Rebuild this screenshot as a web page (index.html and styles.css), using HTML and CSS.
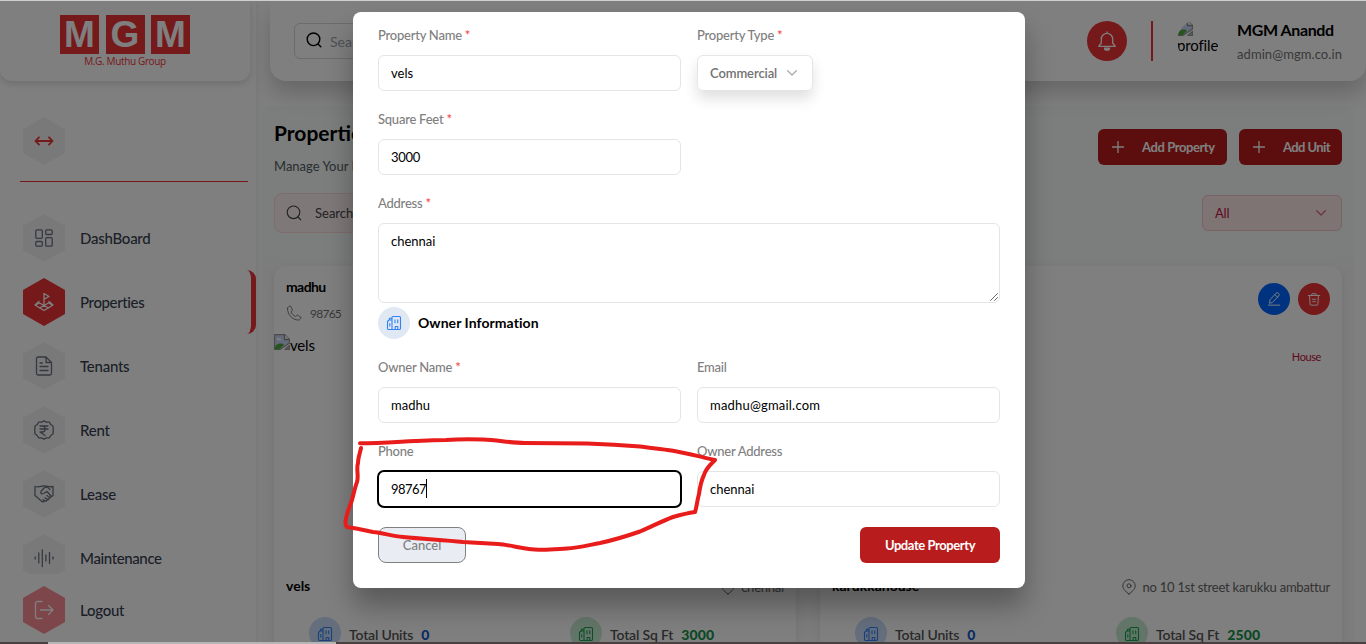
FILE: index.html
```html
<!DOCTYPE html>
<html lang="en">
<head>
<meta charset="utf-8">
<title>MGM Properties</title>
<link rel="stylesheet" href="styles.css">
</head>
<body>
<svg class="defs" width="0" height="0">
  <symbol id="building" viewBox="0 0 16 16"><path d="M6 14.5V2.6A1.1 1.1 0 0 1 7.100 1.500h6.300A1.100 1.100 0 0 1 14.500 2.600v10.800a1.100 1.100 0 0 1-1.100 1.100H2.600a1.100 1.100 0 0 1-1.100-1.100V6.500L3 5h3M3.500 5V3.300H6M9.200 14.500v-3h2.600v3M3.800 8.500v2.500M9 4.800v3M11.700 4.800v3"/></symbol>
  <symbol id="pin" viewBox="0 0 16 16"><path d="M8 15C5.500 13 1.800 10.500 1.800 6.900a6.200 6.200 0 0 1 12.400 0C14.200 10.500 10.500 13 8 15z"/><circle cx="8" cy="6.800" r="2"/></symbol>
  <symbol id="search" viewBox="0 0 16 16"><circle cx="7.500" cy="7.300" r="6.300"/><path d="m12 12 2.800 2.800"/></symbol>
  <symbol id="chevron" viewBox="0 0 10 6"><path d="m.7.700 4.300 4.300L9.300.700"/></symbol>
  <symbol id="broken" viewBox="0 0 16 16"><path d="M.5 15V.500h10l5 5V9L6 15.500z" fill="#c6d7f5" stroke="#999"/><path d="M10.500.500v5h5" fill="#fff" stroke="#888"/><path d="M2.500 5.500q1.500-2.500 3.500-.8 2 0 1.500 1.500h-5z" fill="#fff"/><path d="M.5 15.500c0-4 3-6 6-6 2 0 3 .7 3.500 1.500L5 15.500z" fill="#4ea83a"/><path d="m11 15.500 4.500-4v4z" fill="#b5c9ec" stroke="#999"/></symbol>
</svg>
<div class="strip"></div>
<div class="app">
  <aside class="side">
    <div class="brand">
      <div class="tiles"><b>M</b><b>G</b><b>M</b></div>
      <div class="brand-name">M.G. Muthu Group</div>
    </div>
    <div class="toggle"><span class="hex"><svg class="ic red" viewBox="0 0 20 20"><path d="M1.500 10h17M5 6.300 1.500 10 5 13.700M15 6.300l3.500 3.700-3.500 3.700"/></svg></span></div>
    <hr class="rule">
    <nav class="nav">
      <a class="item"><span class="hex"><svg class="ic" viewBox="0 0 20 20"><rect x="1.800" y="1.800" width="6.500" height="8.500" rx="1"/><rect x="11.700" y="1.800" width="6.500" height="4.700" rx="1"/><rect x="1.800" y="13.500" width="6.500" height="4.700" rx="1"/><rect x="11.700" y="9.700" width="6.500" height="8.500" rx="1"/></svg></span><span>DashBoard</span></a>
      <a class="item active"><span class="hex hot"><svg class="ic" viewBox="0 0 20 20"><path d="M10 12V1.500l5 3-5 2.800M5 9.500l-4 3.500 9 5.500 9-5.500-4-3.500M1.500 13l4-2 9 5M18.500 13l-4-2-9 5"/></svg></span><span class="tight">Properties</span></a>
      <a class="item"><span class="hex"><svg class="ic" viewBox="0 0 20 20"><path d="M12 1H4a1.500 1.500 0 0 0-1.500 1.500v15A1.500 1.500 0 0 0 4 19h12a1.500 1.500 0 0 0 1.500-1.500v-11zM12 1v5.500h5.500M6 7h2.500M6 10.500h8M6 14.500h8"/></svg></span><span>Tenants</span></a>
      <a class="item"><span class="hex"><svg class="ic" viewBox="0 0 20 20"><path d="M10 .8l2.500 1.300 2.800.1 1.500 2.400 2.300 1.700v2.500L19.500 10l-.4 1.300v2.500l-2.300 1.700-1.500 2.300-2.800.1L10 19.200l-2.500-1.300-2.800-.1-1.500-2.300-2.300-1.700v-2.500L.5 10l.4-1.200V6.300l2.300-1.700 1.500-2.400 2.800-.1zM6 6h8M6 9h8M6 6h2.500c3.500 0 3.500 6 0 6H6l5 3.500"/></svg></span><span>Rent</span></a>
      <a class="item"><span class="hex"><svg class="ic" viewBox="0 0 20 20"><path d="M1 2.500c3 1 5 .3 8-.5 4-.5 6 1.500 10 .5v9l-2 1.500M1 2.500v9L8.500 18l2-.7-1.500-1.500M9.500 16l2.500 1.200 1.500-1.500-2.500-2M12.500 15l2 .5 1.300-1.700-2.800-2.300M15.500 13.500l2-1L13 7.500 9.500 9.500C7.500 10.500 6 9 7 7.500l3-3.500c2-1.500 4-1 6 1.500"/></svg></span><span>Lease</span></a>
      <a class="item"><span class="hex"><svg class="ic" viewBox="0 0 20 20"><path d="M1.200 9v2M4.800 5v10M8.300 2v16.500M11.900 7v6M15.500 4.500v11M19 9v2"/></svg></span><span class="tight">Maintenance</span></a>
    </nav>
    <a class="item logout"><span class="hex pink"><svg class="ic" viewBox="0 0 20 20"><path d="M8 1.500H3.500a2 2 0 0 0-2 2v13a2 2 0 0 0 2 2H8M6.500 10h12M14.500 5.500 19 10l-4.500 4.500"/></svg></span><span>Logout</span></a>
  </aside>
  <div class="right">
    <header class="top">
      <div class="top-search"><svg class="ic16" viewBox="0 0 16 16"><use href="#search"/></svg><span>Search</span></div>
      <div class="user">
        <span class="bell"><svg class="ic" viewBox="0 0 20 20"><path d="M4.300 12V8a5.700 5.700 0 0 1 11.400 0v4l2.600 3.300H1.700zM10 1v1.300"/><path d="M7.500 17.200h5a2.500 2 0 0 1-5 0z" fill="currentColor"/></svg></span>
        <span class="bar"></span>
        <span class="avatar"><svg class="broken" viewBox="0 0 16 16"><use href="#broken"/></svg><span class="t-profile">profile</span></span>
        <span class="who"><strong>MGM Anandd</strong><span class="t-mail">admin@mgm.co.in</span></span>
      </div>
    </header>
    <main class="panel">
      <div class="head">
        <div><h1>Properties</h1><p class="sub">Manage Your Properties</p></div>
        <div class="acts">
          <span class="btn add"><svg class="plus" viewBox="0 0 12 12"><path d="M6 .5v11M.5 6h11"/></svg><span class="t-add">Add Property</span></span>
          <span class="btn add"><svg class="plus" viewBox="0 0 12 12"><path d="M6 .5v11M.5 6h11"/></svg><span class="t-unit">Add Unit</span></span>
        </div>
      </div>
      <div class="filters">
        <div class="find"><svg class="ic16" viewBox="0 0 16 16"><use href="#search"/></svg><span>Search</span></div>
        <div class="all"><span>All</span><svg class="chev" viewBox="0 0 10 6"><use href="#chevron"/></svg></div>
      </div>
      <div class="cards">
        <section class="card">
          <div class="card-head"><div><h2 class="t-madhu">madhu</h2><div class="tel"><svg class="ic16" viewBox="0 0 16 16"><path d="M1.500 3.500C1.500 10 6.500 15 12.500 15c1.500 0 2.500-1.500 2.500-2.500L11.500 10l-2 1.500C7.500 10.500 5.500 8.500 5 7l1.500-2L4.500 1c-1.500 0-3 1-3 2.500z"/></svg><span>98765</span></div></div></div>
          <div class="photo"><svg class="broken" viewBox="0 0 16 16"><use href="#broken"/></svg><span class="t-alt">vels</span></div>
          <div class="place"><h2>vels</h2><span class="loc"><svg class="ic16" viewBox="0 0 16 16"><use href="#pin"/></svg><span>chennai</span></span></div>
          <div class="stats">
            <div class="stat blue"><span class="dot"><svg class="ic16" viewBox="0 0 16 16"><use href="#building"/></svg></span><span>Total Units</span><b>0</b></div>
            <div class="stat green"><span class="dot"><svg class="ic16" viewBox="0 0 16 16"><use href="#building"/></svg></span><span>Total Sq Ft</span><b>3000</b></div>
          </div>
        </section>
        <section class="card">
          <div class="card-head end">
            <span class="round edit"><svg class="ic16" viewBox="0 0 16 16"><path d="M1.500 15h13M3 12.500l.5-3.800L10.300 1.500a2.100 2.100 0 0 1 3 3L6.500 11.700zM9 3l3 3"/></svg></span>
            <span class="round del"><svg class="ic16" viewBox="0 0 16 16"><path d="M1.500 4h13M5 4l.7-2h4.600L11 4M3 4l.5 10a1 1 0 0 0 1 1h7a1 1 0 0 0 1-1L13 4M6 8.300h4M6.500 11h3"/></svg></span>
          </div>
          <div class="photo kind"><span>House</span></div>
          <div class="place"><h2>karukkahouse</h2><span class="loc"><svg class="ic16" viewBox="0 0 16 16"><use href="#pin"/></svg><span>no 10 1st street karukku ambattur</span></span></div>
          <div class="stats">
            <div class="stat blue"><span class="dot"><svg class="ic16" viewBox="0 0 16 16"><use href="#building"/></svg></span><span>Total Units</span><b>0</b></div>
            <div class="stat green"><span class="dot"><svg class="ic16" viewBox="0 0 16 16"><use href="#building"/></svg></span><span>Total Sq Ft</span><b>2500</b></div>
          </div>
        </section>
      </div>
    </main>
  </div>
</div>
<div class="taskbar"><span></span></div>

<div class="overlay">
  <form class="modal">
    <div class="field"><label>Property Name <i>*</i></label><div class="input">vels</div></div>
    <div class="field"><label>Property Type <i>*</i></label><div class="select"><span>Commercial</span><svg class="chev" viewBox="0 0 10 6"><use href="#chevron"/></svg></div></div>
    <div class="field wide half"><label>Square Feet <i>*</i></label><div class="input digits">3000</div></div>
    <div class="field wide area"><label>Address <i>*</i></label><div class="input tall">chennai<svg class="grip" viewBox="0 0 8 8"><path d="M.5 7.500l7-7M4.500 7.500l3-3"/></svg></div></div>
    <div class="owner"><span class="dot"><svg class="ic16" viewBox="0 0 16 16"><use href="#building"/></svg></span><h3>Owner Information</h3></div>
    <div class="field"><label>Owner Name <i>*</i></label><div class="input">madhu</div></div>
    <div class="field"><label>Email</label><div class="input mail">madhu@gmail.com</div></div>
    <div class="field"><label>Phone</label><div class="input focus">98767<span class="caret"></span></div></div>
    <div class="field"><label>Owner Address</label><div class="input">chennai</div></div>
    <div class="foot"><span class="btn cancel">Cancel</span><span class="btn update">Update Property</span></div>
  </form>
</div>
<svg class="mark" viewBox="0 0 1366 644"><path d="M360 443.300C388 443 419 440 446 440C459 439 471 439 483 439.500C498 440 510 443 525 443L587 443.500C605 444 623 445 640 446.500C651 448 662 449 673 450.700C687 453 701 457 715 460C711 464 706 468 704 475C701 481 700 487 699 494C697 501 697 506 695 512C688 513 680 515 673 517C662 521 651 527 640 531.500C627 536 614 540 600 543C589 545 578 548 567 548.500C558 549 549 550 540 549.700C525 550 512 545 498 544L463 542C443 540 423 539 403 537C392 536 383 533 373 532C364 530 355 528 347 527C345 525 345 523 346 519C347 512 350 506 352 500C354 493 355 487 357 482C359 476 356 469 358 463C358 458 360 453 361 448"/></svg>
</body>
</html>
```
FILE: styles.css
```css
* { box-sizing: border-box; margin: 0; padding: 0; }
body { width: 1366px; height: 644px; overflow: hidden; font-family: Lato, "Open Sans", sans-serif; font-size: 14px; color: #000; background: #fff; white-space: nowrap; }
svg { fill: none; stroke: currentColor; stroke-width: 1.3; stroke-linecap: round; stroke-linejoin: round; flex: none; }
.defs { position: absolute; }
.strip { height: 1px; background: #ccd0d0; }
.app { display: flex; height: 641px; overflow: hidden; }
.ic { width: 20px; height: 20px; }
.ic16 { width: 16px; height: 16px; stroke-width: 1.1; }

.side { width: 256px; height: 641px; flex: none; display: flex; flex-direction: column; box-shadow: 2px 0 5px rgba(0,0,0,.06); z-index: 1; }
.brand { width: 250px; height: 80px; padding-top: 14px; border-radius: 0 0 12px 12px; box-shadow: 0 3px 7px rgba(0,0,0,.14); display: flex; flex-direction: column; align-items: center; }
.tiles { display: flex; gap: 6.500px; }
.tiles b { width: 39px; height: 39px; display: flex; align-items: center; justify-content: center; background: #ed3237; color: #fff; font: bold 37px/39px "Liberation Sans", sans-serif; }
.brand-name { font: 10px/14px "Open Sans", sans-serif; letter-spacing: -.35px; color: #ed3237; }
.toggle { padding: 36px 0 0 23px; }
.hex { width: 42px; height: 48px; flex: none; display: flex; align-items: center; justify-content: center; background: #f3f3f3; color: #6b7280; clip-path: polygon(50% 0, 100% 25%, 100% 75%, 50% 100%, 0 75%, 0 25%); }
.ic.red { color: #ed3237; stroke-width: 1.800; }
.rule { border: 0; height: 1px; margin: 16px 8px 24px 20px; background: #ed3237; flex: none; }
.nav { height: 368px; overflow: hidden; flex: none; }
.item { display: flex; align-items: center; gap: 15px; height: 64px; padding-left: 23px; font-size: 15px; font-weight: 500; color: #374151; letter-spacing: -.25px; }
.item span + span { padding-bottom: 1px; }
.item .tight { letter-spacing: -.38px; }
.active { border-right: 5px solid #ed3237; border-radius: 9px; }
.hot { background: #ed3237; color: #fff; }
.logout { height: 48px; margin-top: 12px; flex: none; }
.pink { background: #fb8c94; color: #fff; }

.right { flex: 1; padding-left: 6px; }
.top { height: 80px; margin-left: 8px; padding: 0 24px; display: flex; align-items: center; justify-content: space-between; background: #fff; border-radius: 0 0 16px 16px; box-shadow: 0 12px 22px rgba(0,0,0,.2); position: relative; }
.top-search { width: 320px; height: 36px; border: 1px solid #d8d8d8; border-radius: 6px; display: flex; align-items: center; gap: 8px; padding-left: 11px; color: #000; }
.top-search svg { stroke-width: 1.4; margin-bottom: 2px; }
.top-search span { color: #9ca3af; }
.user { display: flex; align-items: center; }
.bell { width: 40px; height: 40px; border-radius: 50%; background: #ed3237; color: #fff; display: flex; align-items: center; justify-content: center; margin-right: 24px; }
.bar { width: 2px; height: 40px; background: #ed3237; margin-right: 24px; }
.avatar { width: 42px; height: 42px; display: flex; flex-direction: column; overflow: hidden; margin-right: 18px; font-size: 15px; line-height: 20px; border-radius: 50%; letter-spacing: -.15px; }
.broken { width: 16px; height: 16px; stroke: none; }
.t-profile { margin-top: -1px; }
.who { width: 105px; display: flex; flex-direction: column; gap: 5px; }
.who strong { font-size: 16px; line-height: 20px; letter-spacing: -.4px; }
.t-mail { font-size: 13px; line-height: 18px; color: #737373; letter-spacing: .08px; }

.panel { width: 1092px; height: 560px; margin-top: 25px; padding: 12px; background: linear-gradient(#f6fcfa 150px, #f9f9f9 165px); border-radius: 8px; }
.head { height: 75px; display: flex; justify-content: space-between; }
h1 { font-size: 21px; line-height: 28px; margin-top: 1px; }
.sub { width: 100px; overflow: hidden; font-size: 13px; line-height: 20px; margin-top: 9px; color: #555b63; }
.acts { display: flex; gap: 12px; margin-top: 11px; }
.btn { height: 36px; border-radius: 6px; display: flex; align-items: center; justify-content: center; font-size: 13px; font-weight: 700; padding-bottom: 1px; }
.add { background: #b91c1c; color: #fff; padding: 0 12px 1px 14px; justify-content: space-between; }
.add:first-child { width: 129px; }
.add:last-child { width: 103px; }
.t-add { width: 73px; letter-spacing: -.42px; }
.t-unit { width: 47px; letter-spacing: -.6px; }
.plus { width: 12px; height: 12px; }
.filters { height: 73px; display: flex; justify-content: space-between; }
.find { width: 320px; height: 40px; border: 1px solid #fbdada; border-radius: 8px; background: #fdf0f0; display: flex; align-items: center; gap: 13px; padding-left: 11px; font-size: 13px; color: #444; }
.all { width: 140px; height: 36px; margin-top: 2px; border: 1px solid #f5c2c6; border-radius: 6px; background: #fde8e8; display: flex; align-items: center; justify-content: space-between; padding: 0 15px 0 12px; color: #be123c; font-size: 13px; letter-spacing: -.2px; }
.all svg { opacity: .6; }
.chev { width: 10px; height: 6px; }
.cards { display: flex; gap: 24px; }
.card { width: 522px; height: 420px; background: #fff; border-radius: 12px; box-shadow: 0 2px 8px rgba(0,0,0,.08); }
.card-head { height: 68px; padding: 12px; }
h2 { font-size: 14px; line-height: 18px; }
.t-madhu { letter-spacing: -.6px; }
.tel { display: flex; align-items: center; gap: 8px; margin-top: 9px; font-size: 12px; color: #737373; letter-spacing: -.75px; }
.tel .ic16 { stroke-width: .9; }
.end { display: flex; justify-content: flex-end; gap: 8px; padding-top: 17px; }
.round { width: 32px; height: 32px; border-radius: 50%; color: #fff; display: flex; align-items: center; justify-content: center; }
.round .ic16 { width: 14px; height: 14px; }
.edit { background: #0066ff; }
.del { background: #ed3237; }
.photo { height: 236px; display: flex; align-items: flex-start; line-height: 22px; font-size: 15px; letter-spacing: -.2px; }
.kind { justify-content: flex-end; padding: 13px 21px 0 0; font-size: 11px; line-height: 20px; color: #be123c; letter-spacing: -.4px; }
.place { height: 32px; padding: 0 12px 1px; display: flex; align-items: center; justify-content: space-between; }
.loc { display: flex; align-items: center; gap: 5px; font-size: 13px; color: #666; margin-top: 3px; letter-spacing: -.22px; }
.loc .ic16 { stroke-width: 1; }
.stats { display: flex; padding: 15px 0 0 35px; }
.stat { width: 261px; flex: none; display: flex; align-items: center; gap: 8px; font-size: 14px; font-weight: 600; color: #555; letter-spacing: -.18px; padding-top: 1px; }
.stat > .dot { margin-top: -1px; }
.stat > * { padding-top: 1px; }
.card { overflow: hidden; }
.card:first-child .stat:last-child, .card:last-child .stat:last-child { width: 200px; }
.stat b { letter-spacing: .1px; }
.dot { width: 32px; height: 32px; border-radius: 50%; display: flex; align-items: center; justify-content: center; background: #dfe8f3; color: #3182f6; flex: none; }
.blue .dot { background: #c8dcf8; }
.blue b { color: #1458c8; }
.green .dot { background: #c6ead2; color: #16a34a; }
.green b { color: #16904a; }
.taskbar { height: 2px; background: #4a403f; position: relative; z-index: 6; }
.taskbar span { display: block; width: 288px; height: 2px; margin-left: 48px; background: #b5b5b5; }

.overlay { position: absolute; left: 0; top: 1px; width: 1366px; height: 641px; overflow: hidden; background: rgba(0,0,0,.5); z-index: 5; padding: 11px 0 0 353px; }
.modal { width: 672px; height: 576px; padding: 13px 25px 25px; background: #fff; border-radius: 8px; box-shadow: 0 18px 28px rgba(0,0,0,.3); display: grid; grid-template-columns: 303px 303px; column-gap: 16px; grid-template-rows: 84px 84px 114px 50px 84px 86px 36px; }
.wide, .owner, .foot { grid-column: 1 / -1; }
.half .input { width: 303px; }
label { display: block; height: 22px; line-height: 21px; margin-bottom: 8px; font-size: 13px; font-weight: 500; color: #808080; letter-spacing: -.24px; }
label i { font-style: normal; color: #ef4444; }
.input { height: 36px; border: 1px solid #e5e5e5; border-radius: 6px; padding: 0 12px 1px; display: flex; align-items: center; font-size: 13px; }
.digits { letter-spacing: -.25px; }
.mail { letter-spacing: .2px; }
.tall { height: 80px; align-items: flex-start; padding-top: 9px; position: relative; }
.grip { position: absolute; right: 1px; bottom: 1px; width: 8px; height: 8px; stroke: #444; stroke-width: .8; }
.select { width: 116px; height: 36px; border: 1px solid #e5e5e5; border-radius: 6px; padding: 0 15px 1px 12px; display: flex; align-items: center; justify-content: space-between; color: #737373; font-size: 13px; font-weight: 600; letter-spacing: -.1px; box-shadow: 0 8px 14px rgba(0,0,0,.12); }
.select svg { color: #aaa; }
.owner { display: flex; gap: 8px; align-items: center; height: 32px; }
h3 { font-size: 14px; letter-spacing: .06px; padding-bottom: 1px; }
.focus { outline: 2px solid #000; outline-offset: -1px; letter-spacing: -.55px; }
.caret { width: 1px; height: 19px; background: #000; }
.foot { display: flex; justify-content: space-between; }
.cancel { width: 88px; border: 1px solid #808080; background: #e9ecf2; color: #808080; font-weight: 500; border-radius: 8px; }
.update { width: 140px; background: #b91c1c; color: #fff; letter-spacing: -.42px; }
.area { margin-bottom: -30px; }
.mark { position: absolute; left: 0; top: 0; width: 1366px; height: 644px; z-index: 10; stroke: #e91c1c; stroke-width: 4; }
```
